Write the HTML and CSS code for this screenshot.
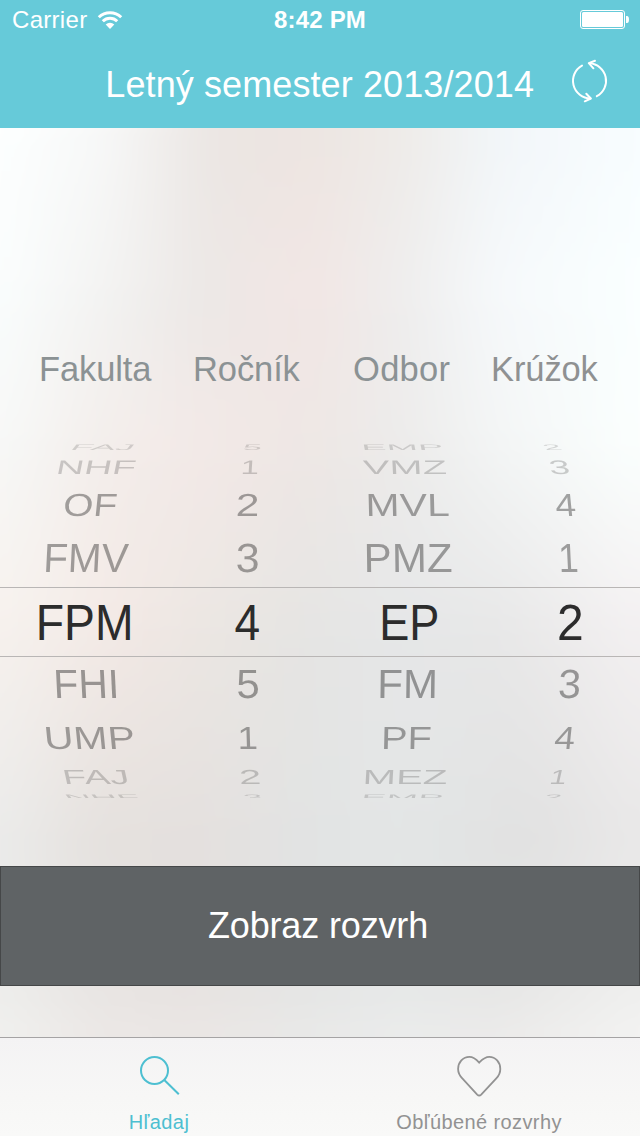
FILE: index.html
```html
<!DOCTYPE html>
<html lang="sk">
<head>
<meta charset="utf-8">
<title>Rozvrh</title>
<link rel="stylesheet" href="styles.css">
</head>
<body>
<div class="app">
  <div class="backdrop" aria-hidden="true">
    <div class="band band-1"></div>
    <div class="band band-2"></div>
    <div class="band band-3"></div>
    <div class="band band-4"></div>
    <div class="band band-5"></div>
    <div class="band band-6"></div>
    <div class="band band-7"></div>
  </div>
  <header class="top">
    <div class="status">
      <div class="carrier"><span class="carrier-name">Carrier</span>
        <svg class="wifi" width="26" height="20" viewBox="0 0 26 20">
          <path d="M1.8 7.2a16 16 0 0 1 22.4 0M5.8 11.2a10.3 10.3 0 0 1 14.4 0" fill="none" stroke="#fff" stroke-width="3"/>
          <path d="M13 19l-4.3-4.4a6.2 6.2 0 0 1 8.6 0z" fill="#fff"/>
        </svg>
      </div>
      <div class="clock">8:42 PM</div>
      <svg class="battery" width="50" height="20" viewBox="0 0 50 20">
        <rect x=".5" y=".5" width="44" height="18" rx="2.5" fill="none" stroke="#fff"/>
        <rect x="2" y="2" width="41" height="15" rx="1.5" fill="#fff"/>
        <path d="M46 6h1q2 0 2 3.5t-2 3.5h-1z" fill="#fff"/>
      </svg>
    </div>
    <div class="nav">
      <h1 class="title">Letný semester 2013/2014</h1>
      <svg class="refresh" width="40" height="46" viewBox="0 0 40 46">
        <g fill="none" stroke="#fff" stroke-width="2" stroke-linecap="round" stroke-linejoin="round">
          <path d="M12 7.6A17.5 17.5 0 0 0 20.5 40.4"/>
          <path d="M26.8 38.2A17.5 17.5 0 0 0 19.5 5.3"/>
          <path d="M16.3 35.7l4.5 4.8-6 2.8"/>
          <path d="M25 2.8l-6.2 2.3 4.6 5.2"/>
        </g>
      </svg>
    </div>
  </header>
  <main class="content">
    <div class="labels">
      <span class="label label-1">Fakulta</span>
      <span class="label label-2">Ročník</span>
      <span class="label label-3">Odbor</span>
      <span class="label label-4">Krúžok</span>
    </div>
    <div class="wheel" id="wheel"></div>
    <button class="submit"><span>Zobraz rozvrh</span></button>
  </main>
  <nav class="tabs">
    <div class="tab tab-active">
      <svg class="tab-icon" width="48" height="44" viewBox="0 0 48 44" fill="none" stroke="currentColor" stroke-width="2">
        <circle cx="19.5" cy="16.5" r="13.5"/><path d="M29.3 26l14.5 14.2"/>
      </svg>
      <span class="tab-text">Hľadaj</span>
    </div>
    <div class="tab">
      <svg class="tab-icon" width="48" height="44" viewBox="-1 0 48 44" fill="none" stroke="currentColor" stroke-width="1.8">
        <path d="M23.2 8.6C21 6.2 18 2.9 13.4 2.9C7 2.9 2.1 8.3 2.1 15C2.1 19 4 22 6.3 24.4L21.2 40.6Q23.2 42.4 25.2 40.6L40.3 24.4C42.6 22 44.3 19 44.3 15C44.3 8.3 39.6 2.9 33.2 2.9C28.6 2.9 25.6 6.2 23.2 8.6Z"/>
      </svg>
      <span class="tab-text">Obľúbené rozvrhy</span>
    </div>
  </nav>
</div>
<script src="wheel.js"></script>
</body>
</html>
```
FILE: styles.css
```css
* { box-sizing: border-box; }
body { margin: 0; font-family: "Liberation Sans", Arial, sans-serif; }
.app { position: relative; display: flex; flex-direction: column; width: 640px; height: 1136px; overflow: hidden; isolation: isolate; }

/* The backdrop overshoots the screen by 60px on each side so its blur has no faded edge. */
.backdrop { position: absolute; inset: -60px; z-index: -1; filter: blur(20px); }
.band { position: absolute; inset: 0; }
.band-1 { background: linear-gradient(90deg, #fdffff 60px, #f8f9f9 160px, #ebe6e3 270px, #ede5e1 360px, #eeebe8 460px, #f2f6f9 560px, #f8fdff 700px); }
.band-2 { background: linear-gradient(90deg, #fafdfd 60px, #f3f3f2 160px, #ece8e6 260px, #f2e6e4 370px, #eeeded 460px, #f6f9fb 560px, #faffff 700px); mask-image: linear-gradient(transparent 188px, #000 360px); }
.band-3 { background: linear-gradient(90deg, #f7f8f7 60px, #f3eeeb 160px, #f3e9e7 260px, #eee7e4 360px, #ecebea 460px, #f3f5f5 560px, #fbfffe 700px); mask-image: linear-gradient(transparent 360px, #000 510px); }
.band-4 { background: linear-gradient(90deg, #f7f2ee 60px, #f3e9e5 180px, #ece7e3 260px, #e6e5e3 360px, #e6e7e8 460px, #e8e8e8 560px, #f4f1f2 700px); mask-image: linear-gradient(transparent 510px, #000 680px); }
.band-5 { background: linear-gradient(90deg, #ebebea 60px, #e5e1de 160px, #e4e0de 260px, #e2e3e3 360px, #e3e6e6 460px, #e1e1e1 590px, #e9e8e8 700px); mask-image: linear-gradient(transparent 680px, #000 890px); }
.band-6 { background: linear-gradient(90deg, #ededeb 60px, #e8e5e3 150px, #e7e2e0 240px, #e5e5e4 360px, #e6e8e8 460px, #e6e6e5 560px, #efefee 700px); mask-image: linear-gradient(transparent 890px, #000 1050px); }
.band-7 { background: linear-gradient(90deg, #f1f1ef 60px, #ece8e6 160px, #ebe7e5 260px, #e9e9e8 360px, #ebecec 460px, #ecebea 560px, #f3f3f2 700px); mask-image: linear-gradient(transparent 1050px, #000 1096px); }

.top { height: 128px; background: #66cad9; color: #fff; }
.status { display: grid; grid-template-columns: 1fr auto 1fr; align-items: center; height: 40px; padding: 0 10px 0 12px; }
.carrier { display: flex; align-items: center; gap: 10px; }
.carrier-name { font-size: 24px; line-height: 40px; letter-spacing: .3px; }
.clock { margin-left: -2px; font-size: 24px; font-weight: 700; line-height: 40px; letter-spacing: .2px; }
.battery { justify-self: end; }
.nav { display: flex; align-items: center; justify-content: flex-end; height: 88px; padding-right: 30px; }
.title { margin: 0; padding-top: 2px; font-size: 36px; font-weight: 400; line-height: 88px; letter-spacing: .1px; white-space: nowrap; }
.refresh { margin: -6px 0 0 36px; }

.content { display: flex; flex-direction: column; height: 909px; padding-top: 215px; }
.labels { display: flex; height: 52px; padding-left: 39px; color: #8b9294; font-size: 34.5px; line-height: 52px; letter-spacing: -.1px; white-space: nowrap; }
.label-1 { width: 154px; }
.label-2 { width: 160px; }
.label-3 { width: 138px; letter-spacing: .3px; }
.label-4 { color: #8f9192; }
.wheel { height: 356px; margin-top: 47px; overflow: hidden; display: flex; flex-direction: column; color: #000; font-size: 48px; line-height: 48px; }
.wheel-row { display: grid; flex: none; grid-template-columns: repeat(4, 160px); align-items: center; }
.wheel-row-current { border: solid #b9b6b5; border-width: 1px 0; color: #2c2c2c; }
.wheel-cell { display: flex; align-items: center; justify-content: center; height: 0; }
.wheel-item { display: block; white-space: nowrap; }
.submit { height: 120px; margin: 68px 0 0; padding: 0; border: 1px solid #454748; background: #5f6365; color: #fff; font: 36px/118px "Liberation Sans", Arial, sans-serif; letter-spacing: -.15px; }
.submit span { position: relative; left: -2px; }

.tabs { display: grid; grid-template-columns: 1fr 1fr; height: 99px; border-top: 1px solid #a5a3a4; background: linear-gradient(#f4f3f4, #f7f7f6 60%, #f9f9f8); color: #929292; }
.tab { display: flex; flex-direction: column; align-items: center; padding: 16px 2px 0 0; }
.tab-active { color: #4dbfd1; }
.tab-icon { display: block; }
.tab-text { font-size: 20px; line-height: 24px; margin-top: 12px; white-space: nowrap; letter-spacing: .4px; }
```
FILE: wheel.js
```javascript
// Each row: height, glyph height, opacity, lean, and four cells [text, left, right].
const rows = [
  { size: 10, glyph: 5.5, alpha: .14, lean: .8, cells: [["FAJ", 71, 134], ["5", 242.5, 261], ["EMP", 363, 442], ["2", 542, 562]] },
  { size: 29, glyph: 13.5, alpha: .18, lean: .2, cells: [["NHF", 57, 136], ["1", 242, 258], ["VMZ", 363, 446.5], ["3", 548, 569.5]] },
  { size: 48, glyph: 22, alpha: .34, lean: .1, cells: [["OF", 63.5, 117], ["2", 237, 258], ["MVL", 367.5, 449], ["4", 554.5, 576]] },
  { size: 58, glyph: 28, alpha: .35, lean: .05, cells: [["FMV", 45.5, 129.5], ["3", 236, 258], ["PMZ", 366.5, 452], ["1", 559.5, 577.5]] },
  { size: 70, glyph: 34, alpha: 1, lean: 0, cells: [["FPM", 39, 131], ["4", 235, 259], ["EP", 382, 437.5], ["2", 559, 582]] },
  { size: 54, glyph: 28, alpha: .36, lean: -.05, cells: [["FHI", 55.5, 116.5], ["5", 236.5, 258], ["FM", 380, 436], ["3", 558, 580]] },
  { size: 54, glyph: 22, alpha: .34, lean: -.1, cells: [["UMP", 45, 134], ["1", 239, 256.5], ["PF", 383.5, 431.5], ["4", 554, 575.5]] },
  { size: 23, glyph: 14, alpha: .18, lean: -.22, cells: [["FAJ", 63, 128], ["2", 240, 260], ["MEZ", 365, 447], ["1", 550, 567]] },
  { size: 17, glyph: 5.5, alpha: .14, lean: -.8, cells: [["NHF", 64.5, 140], ["3", 242.5, 261.5], ["EMP", 363, 442.5], ["2", 542.5, 562]] }
];
const leanByColumn = [1, .3, -.25, -1];
const capHeight = 33;
const pen = document.createElement("canvas").getContext("2d");
pen.font = '48px "Liberation Sans"';

const wheel = document.getElementById("wheel");
rows.forEach(row => {
  const current = row.lean === 0;
  const line = document.createElement("div");
  line.className = current ? "wheel-row wheel-row-current" : "wheel-row";
  line.style.height = row.size + "px";
  row.cells.forEach(([text, left, right], column) => {
    const cell = document.createElement("div");
    cell.className = "wheel-cell";
    const item = document.createElement("span");
    item.className = "wheel-item";
    item.textContent = text;
    const m = pen.measureText(text);
    const ink = m.actualBoundingBoxRight + m.actualBoundingBoxLeft;
    const inkCentre = (m.actualBoundingBoxRight - m.actualBoundingBoxLeft) / 2 - m.width / 2;
    const lean = row.lean * leanByColumn[column];
    const sx = (right - left - Math.abs(lean) * row.glyph) / ink;
    const sy = row.glyph / capHeight;
    const dx = (left + right) / 2 - (column * 160 + 80) - inkCentre * sx;
    const dy = current ? 1.5 : 0;
    item.style.transform = `matrix(${sx}, 0, ${-lean * sy}, ${sy}, ${dx}, ${dy})`;
    item.style.opacity = row.alpha;
    cell.append(item);
    line.append(cell);
  });
  wheel.append(line);
});
```
